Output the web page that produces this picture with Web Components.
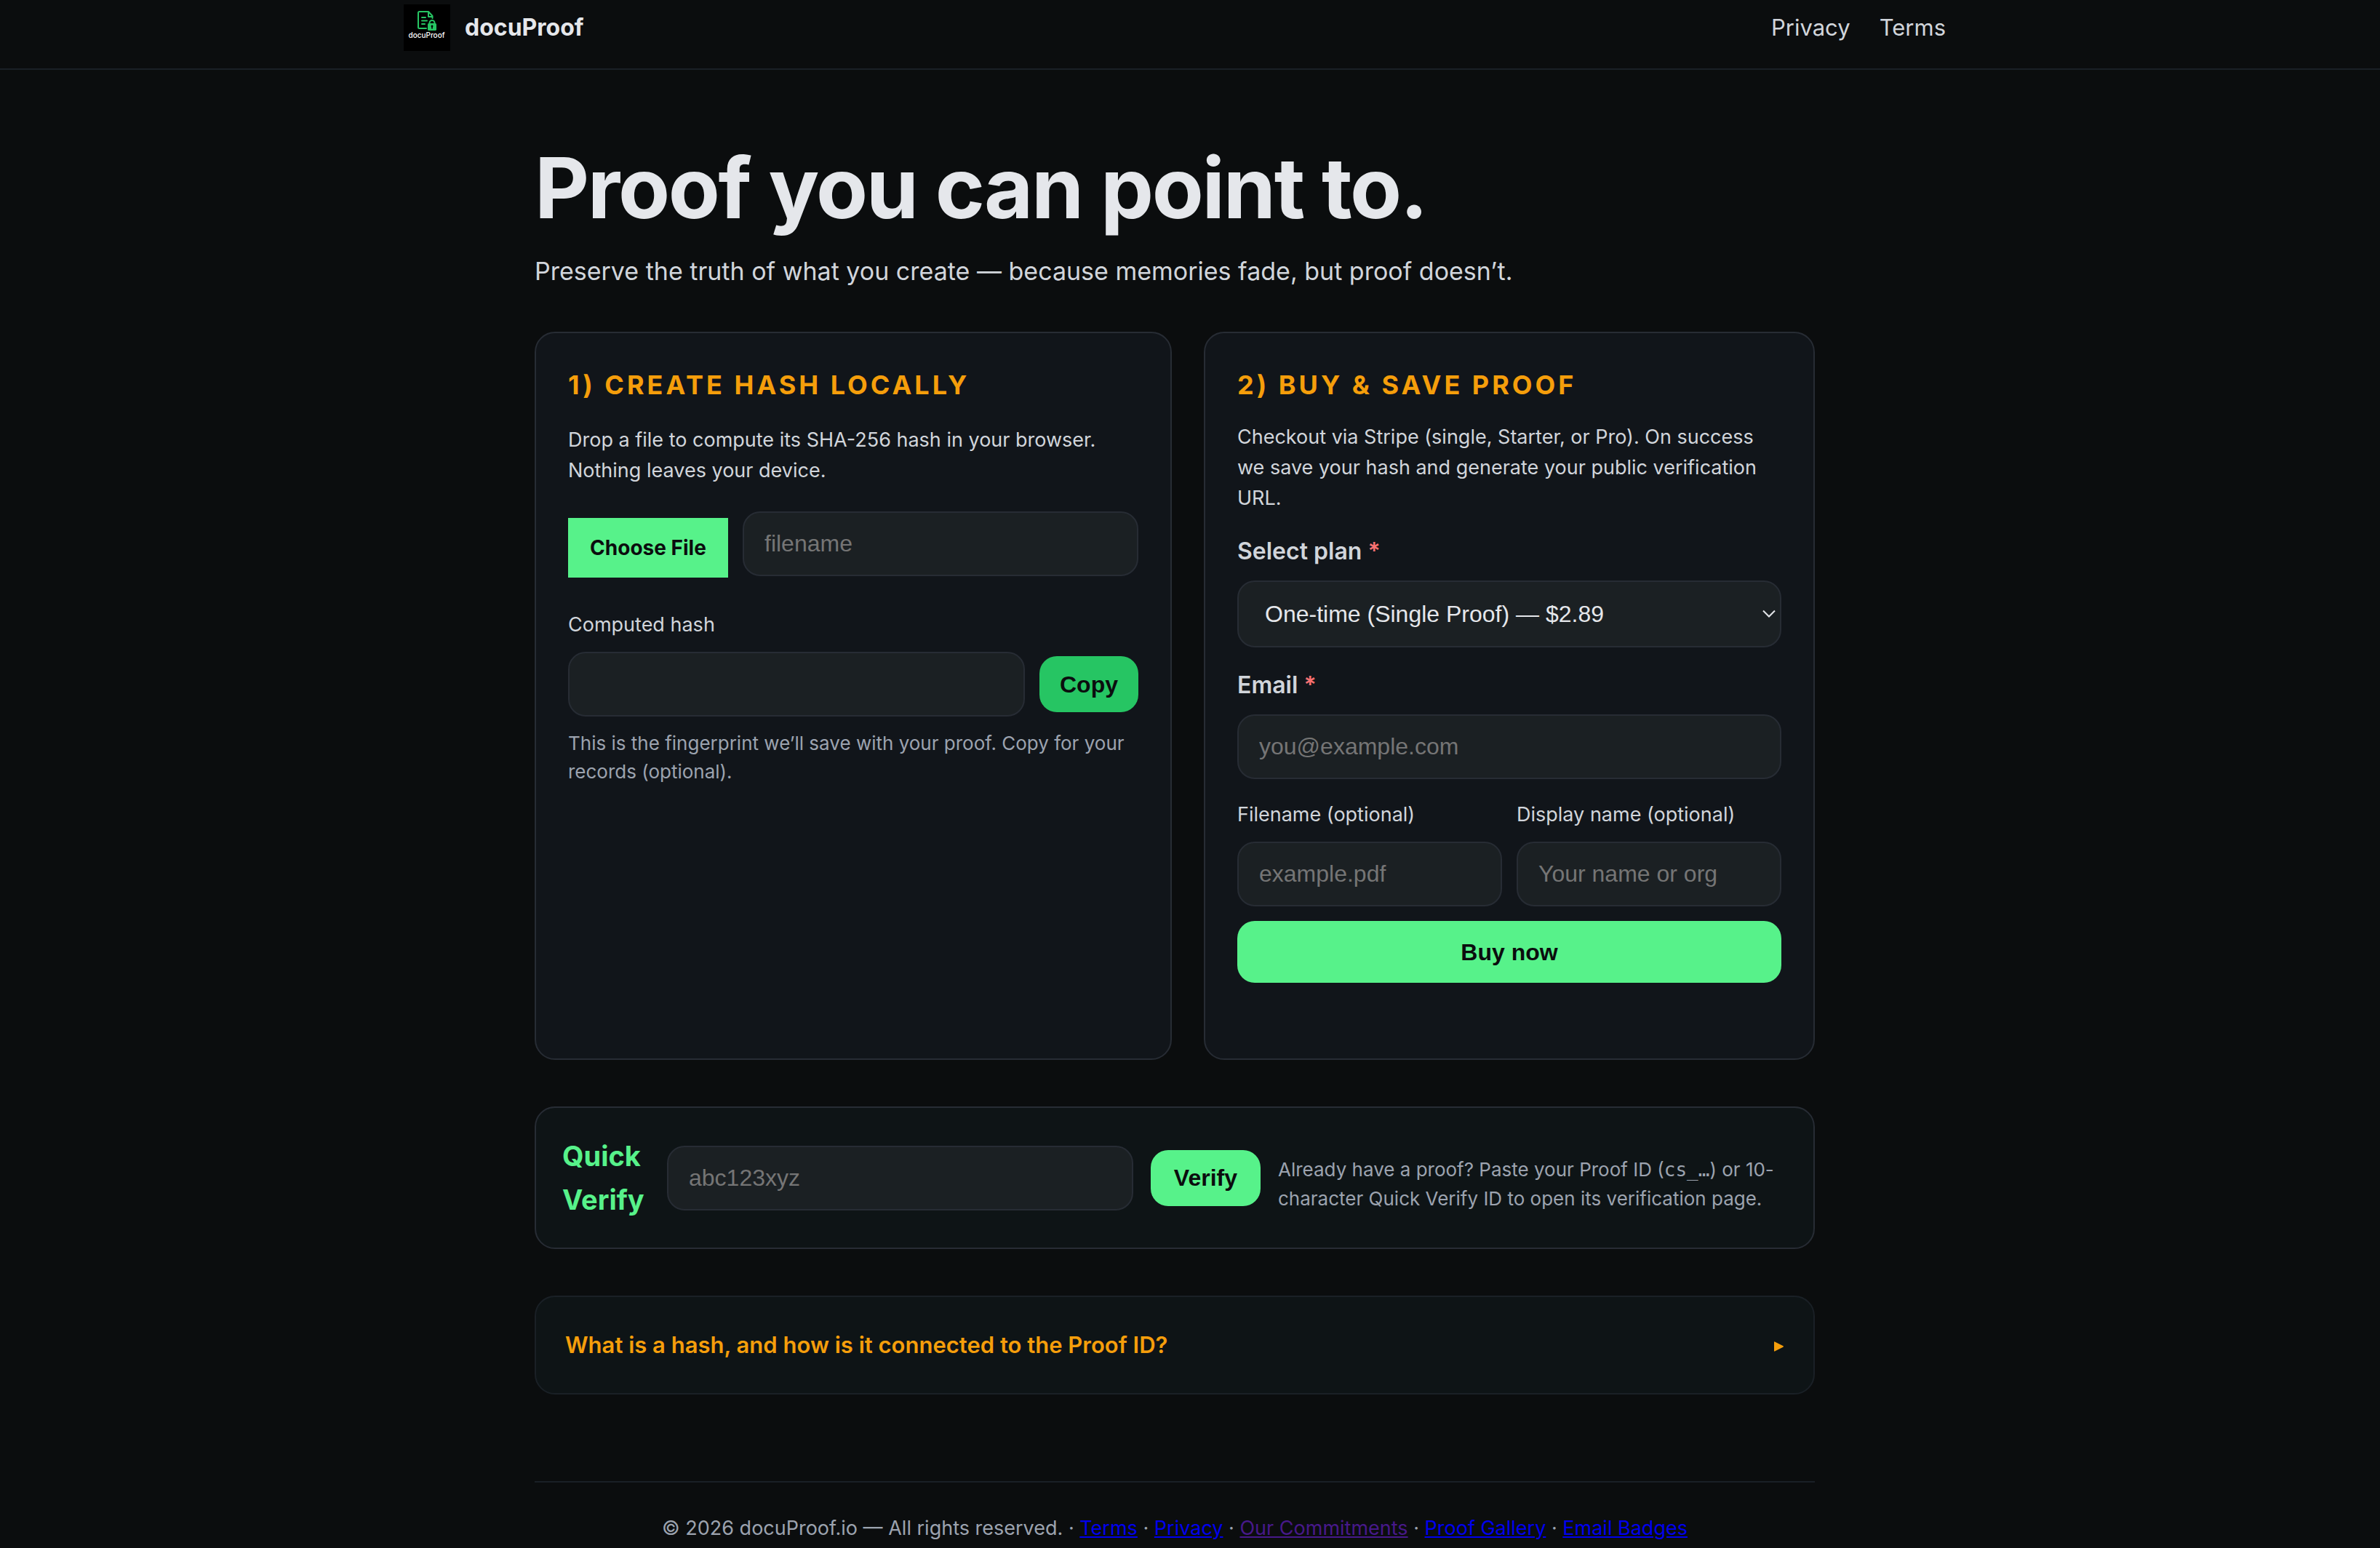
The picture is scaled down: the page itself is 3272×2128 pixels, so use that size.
<!DOCTYPE html>
<html lang="en">
<head>
<meta charset="utf-8">
<title>docuProof</title>
<style>
  :root {
    --bg: #0b0d0e; --panel: #11151a; --panel-2: #0e1416; --field: #1b2023;
    --line: #272c34; --line-soft: #1a2026;
    --text: #e5e7eb; --soft: #d1d5db; --muted: #9ca3af;
    --green: #57f28a; --green-2: #26c563; --orange: #f59e0b;
    --control-font: "Liberation Sans", Arial, sans-serif;
  }
  body {
    margin: 0; padding-right: 42px; background: var(--bg); color: var(--text);
    font: 27px/42px Inter, "Noto Sans", sans-serif;
  }
</style>
</head>
<body>
<proof-app></proof-app>

<script>
const define = (name, html, setup) => {
  const tpl = document.createElement('template');
  tpl.innerHTML = html;
  customElements.define(name, class extends HTMLElement {
    constructor() {
      super();
      this.attachShadow({ mode: 'open' }).append(tpl.content.cloneNode(true));
    }
    connectedCallback() { if (setup) setup(this, this.shadowRoot); }
  });
};

define('brand-logo', `
  <style>:host{display:block;width:64px;height:64px;background:#000} svg{display:block}</style>
  <svg width="64" height="64" viewBox="0 0 64 64" role="img" aria-label="docuProof logo">
    <g fill="none" stroke="#26c563" stroke-width="2" stroke-linecap="round" stroke-linejoin="round">
      <path d="M31 33H21.500Q20 33 20 31.500V11.500Q20 10 21.500 10H34L39.500 16V19"/>
      <path d="M34 10.500V17H39"/>
      <path d="M25 18H30M25 22.500H32M25 27H29"/>
      <path d="M35.500 27V25.500A3.500 3.500 0 0 1 42.500 25.500V27"/>
    </g>
    <rect x="33" y="26" width="12" height="10" rx="1.500" fill="#26c563"/>
    <path d="M39 28.500a1.500 1.500 0 0 1 .8 2.700V33.500h-1.600V31.200A1.500 1.500 0 0 1 39 28.500Z" fill="#000"/>
    <text x="31.500" y="46" text-anchor="middle" font-family="Inter, sans-serif" font-size="10" font-weight="500" fill="#fff">docuProof</text>
  </svg>`);

define('site-header', `
  <style>
    :host{display:block;border-bottom:2px solid var(--line-soft);margin-right:-42px;padding-right:42px}
    .bar{display:flex;justify-content:space-between;align-items:center;max-width:2120px;margin:0 auto;padding:6px 0 24px}
    .brand{display:flex;align-items:center;gap:20px;color:var(--text);font-weight:700;font-size:32px;line-height:48px;text-decoration:none}
    nav{display:flex;gap:40px}
    nav a{color:var(--soft);text-decoration:none;font-size:31px;line-height:48px}
  </style>
  <header class="bar">
    <a class="brand" href="#"><brand-logo></brand-logo><span>docuProof</span></a>
    <nav><a href="#privacy">Privacy</a><a href="#terms">Terms</a></nav>
  </header>`);

define('proof-button', `
  <style>
    :host{display:block;flex:none}
    button{display:block;width:100%;height:77px;border:0;border-radius:24px;padding:0 28px;background:var(--green);color:#0b0d0e;font:700 32px/36px var(--control-font)}
    :host([tone=deep]) button{background:var(--green-2)}
    :host([wide]) button{height:85px}
    :host([roomy]) button{padding:0 32px}
    :host([square]) button{min-width:220px;height:82px;border-radius:0;font:700 28px/42px Inter,sans-serif}
  </style>
  <button type="button"><slot></slot></button>`);

define('proof-field', `
  <style>
    :host{display:block;min-width:0}
    label{display:block;color:var(--soft);margin-bottom:16px}
    label[hidden]{display:none}
    :host([strong]) label{font-size:32px;line-height:48px;font-weight:600}
    i{color:#f87171;font-style:normal}
    .row{display:flex;align-items:center;gap:20px}
    input{flex:1;min-width:0;width:100%;height:89px;box-sizing:border-box;border:2px solid var(--line);border-radius:24px;background:var(--field);color:var(--text);padding:0 28px;font:32px/40px var(--control-font)}
    input::placeholder{color:#757575;opacity:1}
  </style>
  <label for="c"><span></span></label>
  <div class="row"><input id="c"><slot name="action"></slot></div>`,
  (host, root) => {
    const label = root.querySelector('label'), input = root.querySelector('input');
    const text = host.getAttribute('label');
    if (text) root.querySelector('span').textContent = text;
    else { label.hidden = true; input.setAttribute('aria-label', host.getAttribute('name')); }
    if (host.hasAttribute('required') && !root.querySelector('i')) {
      const star = document.createElement('i');
      star.textContent = '*';
      label.append(' ', star);
    }
    input.type = host.getAttribute('type') || 'text';
    input.placeholder = host.getAttribute('placeholder') || '';
  });

define('plan-select', `
  <style>
    :host{display:block}
    label{display:block;color:var(--soft);margin-bottom:16px;font-size:32px;line-height:48px;font-weight:600}
    i{color:#f87171;font-style:normal}
    .wrap{display:grid;align-items:center}
    select,svg{grid-area:1/1}
    svg{justify-self:end;margin-right:8px;pointer-events:none}
    select{appearance:none;width:100%;height:92px;box-sizing:border-box;border:2px solid var(--line);border-radius:24px;background:var(--field);color:var(--text);padding:0 36px;font:32px/40px var(--control-font)}
  </style>
  <label for="plan">Select plan <i>*</i></label>
  <div class="wrap">
    <select id="plan"><option>One-time (Single Proof) — $2.89</option></select>
    <svg width="18" height="12" viewBox="0 0 18 12" fill="none" stroke="#e5e7eb" stroke-width="2"><path d="M1 1.500L9 9.500L17 1.500"/></svg>
  </div>`);

define('proof-card', `
  <style>
    :host{display:block;box-sizing:border-box;min-width:0;background:var(--panel);border:2px solid var(--line);border-radius:28px;padding:44px}
    h2{margin:0 0 24px;color:var(--orange);font-size:36px;line-height:54px;font-weight:700;letter-spacing:4px;text-transform:uppercase}
  </style>
  <h2><slot name="title"></slot></h2>
  <slot></slot>`);

define('hash-panel', `
  <style>
    :host{display:grid}
    p{margin:28px 0 0;color:var(--soft)}
    .pick{display:flex;gap:20px;align-items:flex-start;margin:35px 0 44px}
    .pick proof-button{padding-top:9px}
    .pick proof-field{flex:1}
    .hint{margin-top:17px;color:var(--muted);font-size:26px;line-height:39px}
  </style>
  <proof-card>
    <span slot="title">1) Create hash locally</span>
    <p>Drop a file to compute its SHA-256 hash in your browser. Nothing leaves your device.</p>
    <div class="pick">
      <proof-button square>Choose File</proof-button>
      <proof-field name="filename" placeholder="filename"></proof-field>
    </div>
    <proof-field label="Computed hash"><proof-button slot="action" tone="deep">Copy</proof-button></proof-field>
    <p class="hint">This is the fingerprint we’ll save with your proof. Copy for your records (optional).</p>
  </proof-card>`);

define('buy-panel', `
  <style>
    :host{display:grid}
    p{margin:0;color:var(--soft)}
    form{display:grid;gap:28px;margin:28px 0 60px}
    .pair{display:grid;grid-template-columns:1fr 1fr;gap:20px}
    proof-button{grid-column:1/-1}
  </style>
  <proof-card>
    <span slot="title">2) Buy &amp; save proof</span>
    <p>Checkout via Stripe (single, Starter, or Pro). On success we save your hash and generate your public verification URL.</p>
    <form>
      <plan-select></plan-select>
      <proof-field strong required label="Email" type="email" placeholder="you@example.com"></proof-field>
      <div class="pair">
        <proof-field label="Filename (optional)" placeholder="example.pdf"></proof-field>
        <proof-field label="Display name (optional)" placeholder="Your name or org"></proof-field>
        <proof-button wide>Buy now</proof-button>
      </div>
    </form>
  </proof-card>`);

define('quick-verify', `
  <style>
    :host{display:flex;align-items:center;gap:24px;background:var(--panel-2);border:2px solid var(--line);border-radius:28px;padding:36px}
    h2{margin:0;width:120px;flex:none;color:var(--green);font-size:38px;line-height:60px;font-weight:700}
    proof-field{flex:1}
    p{margin:16px 0 0;width:700px;color:var(--muted);font-size:26px;line-height:39px}
    code{font-family:"DejaVu Sans Mono",monospace}
  </style>
  <h2>Quick Verify</h2>
  <proof-field name="Proof ID" placeholder="abc123xyz"></proof-field>
  <proof-button roomy>Verify</proof-button>
  <p>Already have a proof? Paste your Proof ID (<code>cs_…</code>) or 10-character Quick Verify ID to open its verification page.</p>`);

define('faq-item', `
  <style>
    :host{display:block;background:var(--panel-2);border:2px solid var(--line-soft);border-radius:28px;padding:42px 40px}
    summary{display:flex;justify-content:space-between;align-items:center;list-style:none;color:var(--orange);font-size:31px;line-height:48px;font-weight:600}
    summary::-webkit-details-marker{display:none}
  </style>
  <details><summary><slot></slot><svg width="14" height="18" viewBox="0 0 14 18"><path d="M0 5Q0 4 1 4.500L12.500 10.300Q13.500 11 12.500 11.700L1 17.500Q0 18 0 17Z" fill="#f59e0b"/></svg></summary></details>`);

define('site-footer', `
  <style>
    :host{display:block;border-top:2px solid var(--line-soft);padding-top:42px;text-align:center;color:var(--muted)}
    a{color:#0000ee} a.seen{color:#47198a}
  </style>
  <footer>© 2026 docuProof.io — All rights reserved. · <a href="#terms">Terms</a> · <a href="#privacy">Privacy</a> · <a class="seen" href="#commitments">Our Commitments</a> · <a href="#gallery">Proof Gallery</a> · <a href="#badges">Email Badges</a></footer>`);

define('proof-app', `
  <style>
    :host{display:block}
    main{max-width:1760px;margin:0 auto;padding-top:96px}
    h1{margin:0 0 22px;font-size:116px;line-height:132px;font-weight:700;letter-spacing:-.02em}
    .lead{margin:0 0 56px;color:var(--soft);font-size:34px;line-height:54px}
    .cards{display:grid;grid-template-columns:73fr 70fr;gap:44px}
    quick-verify,faq-item{margin-top:64px}
    site-footer{margin-top:119px}
  </style>
  <site-header></site-header>
  <main>
    <h1>Proof you can point to.</h1>
    <p class="lead">Preserve the truth of what you create — because memories fade, but proof doesn’t.</p>
    <div class="cards"><hash-panel></hash-panel><buy-panel></buy-panel></div>
    <quick-verify></quick-verify>
    <faq-item>What is a hash, and how is it connected to the Proof ID?</faq-item>
    <site-footer></site-footer>
  </main>`);
</script>
</body>
</html>
